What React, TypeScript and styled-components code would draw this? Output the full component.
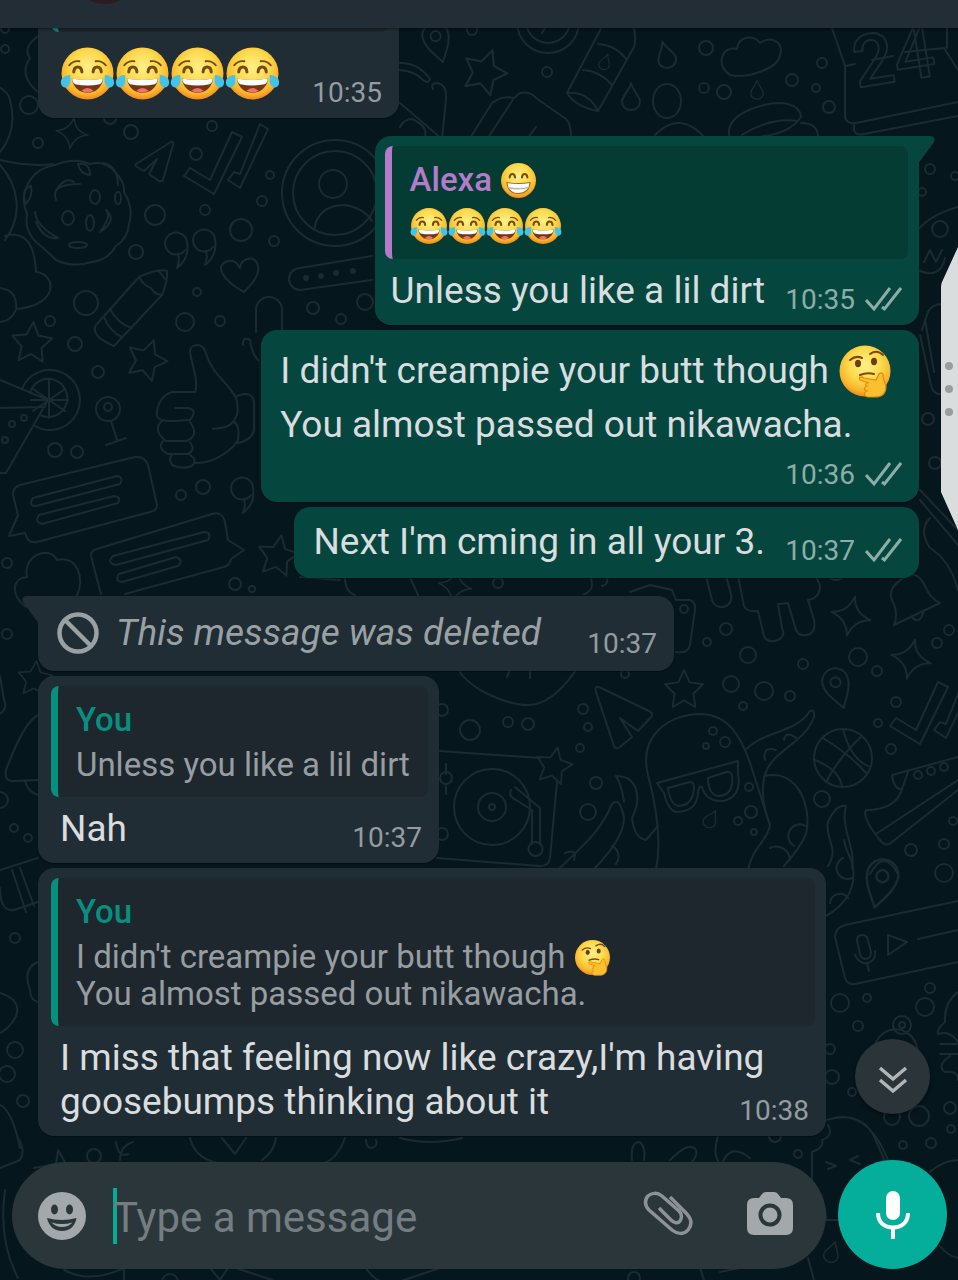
import React from "react";
import styled, { createGlobalStyle, css } from "styled-components";

const GlobalStyle = createGlobalStyle`
  *, *::before, *::after { box-sizing: border-box; }
  body {
    margin: 0;
    background: #05161d;
    font-family: Roboto, "Liberation Sans", sans-serif;
  }
`;

/* ---------- page frame ---------- */

const Screen = styled.div`
  position: relative;
  isolation: isolate;
  display: flex;
  flex-direction: column;
  height: 100vh;
  overflow: hidden;
  background: #05161d;
`;

const TopBar = styled.header`
  display: flex;
  align-items: flex-start;
  flex: none;
  height: 28px;
  padding-left: 72px;
  overflow: hidden;
  background: #222d35;
  box-shadow: 0 1px 3px rgba(0, 0, 0, 0.5);
  z-index: 1;
`;

const Avatar = styled.span`
  width: 66px;
  height: 66px;
  margin-top: -62px;
  border-radius: 50%;
  background: #2f1a20;
`;

const Thread = styled.main`
  display: flex;
  flex: 1;
  flex-direction: column;
  justify-content: flex-end;
  gap: 5px;
  min-height: 0;
  overflow: hidden;
  padding: 0 39px 24px 38px;
`;

/* ---------- messages ---------- */

const Bubble = styled.article<{ $out?: boolean; $first?: boolean }>`
  position: relative;
  flex: none;
  align-self: ${(p) => (p.$out ? "flex-end" : "flex-start")};
  max-width: calc(100% - 93px);
  margin-top: ${(p) => (p.$first ? "13px" : "0")};
  border-radius: 16px;
  background: ${(p) => (p.$out ? "#05473f" : "#212d34")};
  color: #d9dddf;
  box-shadow: 0 1px 1px rgba(0, 0, 0, 0.35);
  ${(p) =>
    p.$first &&
    (p.$out
      ? css`
          border-top-right-radius: 0;
        `
      : css`
          border-top-left-radius: 0;
        `)}
`;

const Tail = styled.svg<{ $out?: boolean }>`
  position: absolute;
  top: 0;
  width: 18px;
  height: 30px;
  ${(p) => (p.$out ? "left: 100%; margin-left: -1px;" : "right: 100%; margin-right: -1px; transform: scaleX(-1);")}
  fill: ${(p) => (p.$out ? "#05473f" : "#212d34")};
`;

const Quote = styled.blockquote<{ $out?: boolean; $color: string }>`
  margin: 0 11px 0 ${(p) => (p.$out ? "10px" : "13px")};
  padding: 12px 18px 14px 18px;
  border-left: 7px solid ${(p) => p.$color};
  border-radius: 8px;
  background: ${(p) => (p.$out ? "#043c34" : "#1e272d")};
  color: #979da1;
  font-size: 33px;
  line-height: 36px;
`;

const QuoteTop = styled.div`
  padding-top: 10px;
`;

const QuoteName = styled.cite<{ $color: string }>`
  display: flex;
  align-items: center;
  gap: 8px;
  margin-bottom: 5px;
  color: ${(p) => p.$color};
  font-style: normal;
  font-weight: 500;
  line-height: 44px;
`;

const Body = styled.div<{ $out?: boolean; $reply?: boolean; $stacked?: boolean }>`
  display: grid;
  padding: 13px 17px 14px 19px;
  ${(p) =>
    p.$reply &&
    css`
      padding-top: 10px;
      padding-bottom: 12px;
      padding-left: ${p.$out ? "16px" : "22px"};
    `}
  ${(p) => !p.$stacked && "& > * { grid-area: 1 / 1; }"}
`;

const Text = styled.p<{ $muted?: boolean }>`
  margin: 0;
  font-size: 37px;
  line-height: 44px;
  ${(p) => p.$muted && "color: #9aa1a5; font-style: italic;"}
`;

const Reserve = styled.span<{ $out?: boolean }>`
  display: inline-block;
  width: ${(p) => (p.$out ? "137px" : "90px")};
`;

const Meta = styled.footer<{ $out?: boolean }>`
  display: flex;
  align-items: center;
  gap: 10px;
  align-self: end;
  justify-self: end;
  color: ${(p) => (p.$out ? "#8dada7" : "#949ca1")};
  font-size: 28px;
  line-height: 26px;
`;

const DeletedRow = styled.div`
  display: flex;
  align-items: center;
  gap: 17px;
  padding: 2px 26px 2px 0;
`;

const EmojiSvg = styled.svg<{ $size: number; $raise?: number }>`
  display: inline-block;
  width: ${(p) => p.$size}px;
  height: ${(p) => p.$size}px;
  vertical-align: ${(p) => -(p.$raise ?? 0)}px;
`;

const EmojiRow = styled.span`
  display: flex;
`;

/* ---------- composer ---------- */

const Composer = styled.form`
  display: flex;
  align-items: flex-end;
  flex: none;
  gap: 12px;
  padding: 0 11px 11px 12px;
`;

const Field = styled.div`
  display: flex;
  align-items: center;
  flex: 1;
  min-width: 0;
  height: 107px;
  padding: 0 33px 0 26px;
  border-radius: 54px;
  background: #2b363b;
`;

const IconButton = styled.button`
  display: grid;
  place-items: center;
  flex: none;
  padding: 0;
  border: 0;
  background: none;
  color: #a3a8ab;
`;

const Caret = styled.span`
  flex: none;
  width: 4px;
  height: 56px;
  margin: 0 -4px 0 27px;
  background: #08ab95;
`;

const Input = styled.input`
  flex: 1;
  min-width: 0;
  height: 60px;
  padding: 3px 0 0;
  border: 0;
  outline: 0;
  background: none;
  color: #d9dddf;
  font: 400 42px Roboto, "Liberation Sans", sans-serif;
  &::placeholder {
    color: #747d81;
    opacity: 1;
  }
`;

const Actions = styled.div`
  display: flex;
  align-items: center;
  gap: 54px;
  padding-bottom: 4px;
`;

const MicButton = styled.button`
  display: grid;
  place-items: center;
  flex: none;
  width: 109px;
  height: 109px;
  padding: 0;
  border: 0;
  border-radius: 50%;
  background: #04ae9b;
  color: #fff;
`;

const JumpButton = styled.button`
  position: absolute;
  right: 28px;
  bottom: 166px;
  display: grid;
  place-items: center;
  width: 75px;
  height: 75px;
  padding: 6px 0 0;
  border: 0;
  border-radius: 50%;
  background: #2a3439;
  color: #b0b5b7;
  box-shadow: 0 2px 4px rgba(0, 0, 0, 0.4);
`;

const EdgeHandle = styled.svg`
  position: absolute;
  top: 247px;
  right: 0;
  width: 17px;
  height: 283px;
`;

const Wallpaper = styled.svg`
  position: absolute;
  inset: 0;
  z-index: -1;
  width: 100%;
  height: 100%;
  fill: none;
  stroke: #1b2b31;
  stroke-width: 2;
  stroke-linecap: round;
  stroke-linejoin: round;
`;

/* ---------- emoji ---------- */

type EmojiProps = { size: number; drop?: number };

const JoyEmoji = ({ size, drop }: EmojiProps) => (
  <EmojiSvg $size={size} $raise={drop} viewBox="0 0 54 54" role="img" aria-label="😂">
    <circle cx="27" cy="27" r="25.5" fill="url(#face)" />
    <g fill="none" stroke="#7a4a0c" strokeLinecap="round">
      <path d="M9 19Q13 14 19 15M45 19Q41 14 35 15" strokeWidth="1.8" />
      <path d="M13.500 25.500C14 19 21 19 21.500 25.500M32.500 25.500C33 19 40 19 40.500 25.500" strokeWidth="3" />
    </g>
    <path d="M11.500 32Q27 35 42.500 32C41 41 35 46 27 46S13 41 11.500 32Z" fill="#75370f" />
    <path d="M12 32Q27 35 42 32Q42 36 39 37.500Q27 40 15 37.500Q12 36 12 32Z" fill="#fff" />
    <path d="M21 44Q27 38.500 33 44Q27 47.500 21 44Z" fill="#f0716f" />
    <path d="M10 28.500C3 29 0 33 1 37S6 42 8.500 39 10 33 10 28.500Z" fill="#43c4e6" />
    <path d="M44 28.500C51 29 54 33 53 37S48 42 45.500 39 44 33 44 28.500Z" fill="#43c4e6" />
  </EmojiSvg>
);

const GrinEmoji = ({ size, drop }: EmojiProps) => (
  <EmojiSvg $size={size} $raise={drop} viewBox="0 0 54 54" role="img" aria-label="😁">
    <circle cx="27" cy="27" r="25.500" fill="url(#face)" />
    <path
      d="M14 22.500C15 16 21 16 22 22.500M32 22.500C33 16 39 16 40 22.500"
      fill="none"
      stroke="#7a4a0c"
      strokeWidth="3"
      strokeLinecap="round"
    />
    <path d="M10 30Q27 33 44 30C43 41 36 46 27 46S11 41 10 30Z" fill="#fff" stroke="#a8651a" strokeWidth="1.500" />
    <path d="M11 37Q27 41 43 37" fill="none" stroke="#b9b3a4" strokeWidth="2" />
  </EmojiSvg>
);

const ThinkEmoji = ({ size, drop }: EmojiProps) => (
  <EmojiSvg $size={size} $raise={drop} viewBox="0 0 54 54" role="img" aria-label="🤔">
    <circle cx="27" cy="27" r="25.500" fill="url(#face)" />
    <g fill="none" stroke="#7a4a0c" strokeWidth="2" strokeLinecap="round">
      <path d="M12 16Q18 11 24 14M32 10Q39 5 45 11M22 31Q29 28 36 30" />
    </g>
    <ellipse cx="20" cy="19.500" rx="3" ry="3.700" fill="#6b3d0c" />
    <ellipse cx="36" cy="17.500" rx="3" ry="3.700" fill="#6b3d0c" />
    <path
      d="M22 36C20 33 23 32 26 34L38 36L41 30C43 28 46 29 45 33L48 42C48 50 44 53 37 53H30C25 52 26 48 29 47C25 46 26 43 29 42C26 41 28 38 31 39Z"
      fill="#fcc02e"
      stroke="#e08a12"
      strokeWidth="1.200"
    />
  </EmojiSvg>
);

/* ---------- icons ---------- */

const Ticks = () => (
  <svg width="37" height="26" viewBox="0 0 37 26" fill="none" stroke="#8dada7" strokeWidth="3" role="img" aria-label="Delivered">
    <path d="M1 13L9 22L25 1M17 20L19.500 22L36 1" />
  </svg>
);

const BlockedIcon = () => (
  <svg width="42" height="42" viewBox="0 0 42 42" fill="none" stroke="#9aa1a5" strokeWidth="4.500" aria-hidden="true">
    <circle cx="21" cy="21" r="18.500" />
    <path d="M8 8L34 34" />
  </svg>
);

const SmileIcon = () => (
  <svg width="48" height="48" viewBox="1 1 48 48" aria-hidden="true">
    <circle cx="25" cy="25" r="24" fill="currentColor" />
    <ellipse cx="17.500" cy="18.500" rx="3.500" ry="5" fill="#2b363b" />
    <ellipse cx="32.500" cy="18.500" rx="3.500" ry="5" fill="#2b363b" />
    <path d="M10 27Q25 31 39.500 27C38 36 32 40 25 40S12 36 10 27Z" fill="#2b363b" />
    <path d="M14.500 31.500Q25 34.500 35.500 31.500Q31 36 25 36T14.500 31.500Z" fill="currentColor" />
  </svg>
);

const ClipIcon = () => (
  <svg width="50" height="46" viewBox="0 0 50 46" fill="none" stroke="#8c9295" strokeWidth="3.500" strokeLinecap="butt" aria-hidden="true">
    <path d="M27 6L43 22C49 28 49 34 45 39S34 43 29 39L6 19C1 14 2 8 5 5S14 1 19 5L36 20C39 23 39 27 37 30S31 32 28 29L16 17" />
  </svg>
);

const CameraIcon = () => (
  <svg width="46" height="44" viewBox="0 0 46 44" aria-hidden="true">
    <path
      d="M7 6H12L15 2Q16.500 0 19 0H27Q29.500 0 31 2L34 6H39Q46 6 46 13V36Q46 43 39 43H7Q0 43 0 36V13Q0 6 7 6Z"
      fill="currentColor"
    />
    <circle cx="23" cy="23" r="9.500" fill="currentColor" stroke="#2b363b" strokeWidth="4" />
  </svg>
);

const MicIcon = () => (
  <svg width="36" height="48" viewBox="0 0 36 48" aria-hidden="true">
    <rect x="11" y="0" width="14" height="29" rx="7" fill="currentColor" />
    <path d="M3 22C3 32 10 36.500 18 36.500S33 32 33 22M18 36V48" fill="none" stroke="currentColor" strokeWidth="4" />
  </svg>
);

const DoubleDownIcon = () => (
  <svg width="30" height="28" viewBox="0 0 30 28" fill="none" stroke="currentColor" strokeWidth="3.500" aria-hidden="true">
    <path d="M2 2L15 13L28 2M2 14L15 25L28 14" />
  </svg>
);

/* ---------- wallpaper ---------- */

const dots: number[][] = [
  [5, 29, 4], [5, 49, 4], [29, 105, 9], [38, 143, 5], [131, 132, 7], [110, 118, 6], [196, 154, 6], [212, 126, 5],
  [270, 175, 4], [262, 201, 5], [155, 215, 10], [205, 210, 5], [241, 230, 11], [136, 252, 7], [274, 241, 5],
  [86, 303, 12], [197, 292, 4], [50, 321, 5], [185, 322, 9], [220, 321, 5], [313, 308, 6], [341, 319, 5],
  [365, 302, 8], [75, 344, 7], [98, 372, 6], [108, 409, 12], [108, 407, 4], [55, 450, 7], [77, 452, 6],
  [181, 495, 5], [203, 487, 7], [7, 563, 5], [235, 584, 6], [252, 589, 3], [12, 424, 3], [24, 418, 3], [5, 440, 3],
  [472, 30, 5], [547, 72, 5], [706, 48, 7], [704, 88, 5], [724, 92, 7], [792, 80, 6], [822, 63, 5], [816, 88, 4],
  [829, 107, 6], [930, 169, 5], [922, 192, 4], [955, 176, 4], [928, 419, 6], [935, 463, 6],
  [498, 583, 5], [684, 609, 4], [726, 629, 6], [707, 642, 4], [748, 655, 8], [803, 664, 5], [858, 657, 9],
  [877, 671, 5], [937, 643, 5], [949, 630, 5], [731, 684, 8], [764, 691, 9], [790, 696, 5], [743, 706, 4],
  [583, 709, 5], [588, 727, 4], [580, 748, 4], [470, 730, 10], [508, 722, 5], [528, 724, 6], [442, 710, 6],
  [625, 674, 4], [596, 783, 6], [588, 812, 8], [713, 731, 4], [725, 742, 5], [706, 746, 3], [749, 787, 4],
  [751, 812, 6], [738, 821, 4], [754, 832, 3], [896, 702, 5], [878, 723, 4], [891, 749, 5], [822, 799, 8],
  [911, 850, 6], [944, 844, 5], [953, 821, 4], [442, 834, 6], [836, 570, 10], [944, 873, 9], [840, 1003, 9],
  [867, 998, 4], [858, 1026, 5], [925, 1007, 9], [930, 988, 5], [902, 1025, 9], [902, 1025, 3], [832, 1077, 7],
  [830, 1049, 5], [852, 1092, 4], [892, 1117, 8], [919, 1116, 10], [950, 1108, 6], [951, 1129, 4], [931, 1143, 5],
  [903, 1145, 4], [798, 1154, 4], [15, 938, 5], [15, 1050, 8], [7, 1074, 8], [23, 1101, 6], [14, 828, 4],
  [28, 838, 4], [7, 634, 5], [94, 1156, 7], [0, 800, 8], [775, 1136, 6],
];

const stars: number[][] = [
  [32, 342, 20, 4], [147, 359, 20, 20], [278, 555, 20, 10], [485, 71, 22, 20], [684, 689, 19, 0], [554, 765, 18, 12],
  [35, 678, 17, 5],
];

const sparkles: number[][] = [
  [72, 133, 16, 8], [851, 616, 20, 12], [911, 659, 20, 12], [455, 586, 17, 10],
];

const Doodles = () => (
  <Wallpaper viewBox="0 0 958 1280" preserveAspectRatio="xMidYMid slice" aria-hidden="true">
    <defs>
      <radialGradient id="face" cx="50%" cy="38%" r="64%">
        <stop offset="0" stopColor="#fdf08a" />
        <stop offset="0.5" stopColor="#fdd94c" />
        <stop offset="0.8" stopColor="#fbb52c" />
        <stop offset="1" stopColor="#ee8018" />
      </radialGradient>
      <path id="star" d="M0 -20L6 -7L20 -5L10 5L12 19L0 12L-12 19L-10 5L-20 -5L-6 -7Z" />
      <path id="sparkle" d="M0 -20Q2 -4 20 0Q4 3 0 20Q-3 4 -20 0Q-4 -3 0 -20Z" />
      <path id="pin" d="M0 22C-6 12 -13 4 -13 -6A13 13 0 0 1 13 -6C13 4 6 12 0 22ZM5 -5A5 5 0 1 1 -5 -5A5 5 0 1 1 5 -5" />
      <path id="drop" d="M0 -14C2 -6 9 -1 9 5A9 8 0 0 1 -9 5C-9 -1 -2 -6 0 -14Z" />
      <path id="comma" d="M8 2A11 11 0 1 1 10 -6C12 6 8 14 0 20Q3 12 1 6" />
      <path id="ticks" d="M-42 24L-36 16L-16 28L6 -20L16 -15L-12 42ZM2 28L8 20L14 22L34 -28L42 -23L14 36Z" />
    </defs>
    {dots.map(([x, y, r], i) => (
      <circle key={i} cx={x} cy={y} r={r} />
    ))}
    {stars.map(([x, y, r, a], i) => (
      <use key={i} href="#star" transform={`translate(${x} ${y}) rotate(${a}) scale(${r / 20})`} />
    ))}
    {sparkles.map(([x, y, r, a], i) => (
      <use key={i} href="#sparkle" transform={`translate(${x} ${y}) rotate(${a}) scale(${r / 20})`} />
    ))}
    <use href="#pin" transform="translate(437 41) rotate(-16)" />
    <use href="#pin" transform="translate(837 687) rotate(-18)" />
    <use href="#pin" transform="translate(881 882) rotate(14) scale(1.2)" />
    <use href="#drop" transform="translate(666 55) rotate(-15)" />
    <use href="#drop" transform="translate(631 97)" />
    <use href="#drop" transform="translate(757 90) scale(.7)" />
    <use href="#drop" transform="translate(711 819) rotate(30) scale(.7)" />
    <use href="#drop" transform="translate(832 1252) rotate(18) scale(.8)" />
    <use href="#comma" transform="translate(177 248)" />
    <use href="#comma" transform="translate(205 245)" />
    <use href="#comma" transform="translate(243 493)" />
    <use href="#ticks" transform="translate(226 152)" />
    <use href="#ticks" transform="translate(932 702)" />

    {/* cookie */}
    <path d="M55 165Q75 157 90 164Q105 160 115 172Q125 182 124 192Q134 208 129 224Q128 238 116 246Q108 260 92 262Q72 268 56 260Q46 250 36 242Q24 230 27 214Q20 198 28 184Q36 168 55 165Z" />
    <path d="M56 200Q50 184 80 184M56 190Q66 176 74 182M78 164Q90 162 90 175Q80 174 78 164M103 163Q118 166 118 185M35 212Q36 226 58 238Q44 240 36 222M106 210Q118 220 100 232Q112 216 106 210M26 204Q20 190 31 186Q33 196 26 204" />
    <ellipse cx="95" cy="197" rx="5" ry="7" />
    <ellipse cx="118" cy="198" rx="3" ry="6" />
    <ellipse cx="68" cy="218" rx="6" ry="7" />
    <ellipse cx="90" cy="223" rx="4" ry="8" />
    <ellipse cx="78" cy="245" rx="9" ry="3" />
    <path d="M0 160Q30 167 53 164M0 152Q18 130 10 100Q8 92 0 88M0 165C18 185 24 215 5 240M5 236Q34 228 36 272C56 274 60 304 18 309M0 288Q18 290 16 310Q10 322 0 322M38 36Q22 48 30 58Q18 76 38 92" />

    {/* contact */}
    <circle cx="335" cy="193" r="53" />
    <circle cx="335" cy="193" r="42" />
    <circle cx="333" cy="184" r="14" />
    <path d="M314 230Q318 205 345 205Q364 208 372 221" />
    <path d="M244 292C222 280 214 265 228 261C236 259 238 266 240 268C240 258 256 254 258 266C260 276 250 286 244 292Z" />
    <path d="M372 256L300 268A11 11 0 0 0 300 290L372 280M256 332V310A13 13 0 0 1 282 310V332" />
    <g fill="#1b2b31">
      <circle cx="306" cy="278" r="2" />
      <circle cx="321" cy="276" r="2" />
      <circle cx="336" cy="273" r="2" />
      <circle cx="353" cy="271" r="2" />
    </g>
    <path d="M136 164L171 142Q174 141 173 145L163 180Q162 182 159 181L149 174L157 159L144 171L137 167Q134 165 136 164Z" />

    {/* crayon */}
    <path d="M139 277L96 325Q90 336 114 346L162 295Q168 280 167 271Q158 268 139 277ZM139 277Q144 286 151 288Q154 294 162 295M158 270L165 279M110 309Q118 324 132 328M104 317Q110 332 122 337" />

    {/* citrus and glass */}
    <path d="M22 389A30 30 0 1 1 35 426M30 393A19 19 0 1 1 40 415M49 380V418M33 389L65 411M33 411L65 389M31 400H68M0 380L48 400L6 473H0M0 408L45 407" />
    <path d="M111 421L117 440M106 445L126 438" />

    {/* thumbs up */}
    <path d="M195 392C199 382 192 366 190 352C190 343 202 343 205 351C212 375 228 382 236 398C240 412 236 418 233 422C228 428 220 428 213 429M195 392H172C160 396 156 408 157 416C160 424 180 420 190 420Q198 410 188 408H175M190 422Q200 436 186 441H166Q152 430 162 421M190 442Q196 450 188 454H168Q156 448 164 440M190 455Q198 460 192 466Q182 470 172 465Q168 458 172 455M195 463C215 464 234 448 238 440Q240 425 234 422M237 396Q252 390 254 402V430Q252 440 238 443M243 345Q242 336 250 340Q252 354 258 360" />

    {/* chat bubbles */}
    <path d="M20 485L135 457Q145 456 148 465L157 505Q157 511 150 512L37 542Q28 544 25 533L9 536L18 515L13 495Q13 487 20 485Z" />
    <path d="M33 498L117 476Q124 477 120 484L36 506Q28 506 33 498ZM39 515L114 496Q122 497 118 503L42 524Q34 522 39 515Z" />
    <path d="M125 594L224 567Q230 565 231 559L244 550L228 540L225 522Q222 511 212 514L100 548Q90 550 91 556L101 594" />
    <path d="M113 556L204 532Q212 532 208 540L116 565Q106 563 113 556ZM119 574L176 557Q184 560 178 566L122 582Q114 581 119 574Z" />
    <path d="M26 607C10 595 12 578 27 577C22 555 50 545 57 560C78 555 85 580 77 595" />

    {/* clock, glue, cloud, cup, note */}
    <g transform="translate(0 -5)">
      <circle cx="548" cy="27" r="31" />
      <circle cx="548" cy="26" r="22" />
      <path d="M542 38L548 28M606 24L567 98Q576 112 598 116L634 52Q638 34 628 24M598 49Q616 50 627 65M583 75Q600 76 612 90M567 98Q588 96 598 116" />
      <use href="#drop" transform="translate(605 67) rotate(20) scale(.6)" />
      <ellipse cx="667" cy="106" rx="14" ry="17" />
      <path d="M730 80C715 70 722 50 737 54C738 41 754 39 760 48C772 40 784 48 780 60C778 74 746 84 730 80Z" />
      <path d="M730 144C722 120 760 108 782 108Q800 110 801 122Q790 138 764 141Q738 146 730 158M742 140Q770 122 798 126M801 128Q820 128 818 146M655 140Q680 114 706 144" />
      <path d="M467 148L492 108Q502 100 514 103L520 98Q530 96 536 103L566 124Q572 130 571 148M514 103L486 146M524 148L536 132M400 68C416 68 424 76 430 84Q428 90 422 84Q414 76 400 75M433 94Q430 88 438 88Q447 90 446 104L442 144M400 108L442 144M400 132Q404 124 412 124Q430 132 424 144" />
    </g>

    {/* calendar */}
    <path d="M832 28L845 66V117Q846 124 856 123L958 102M845 66L855 64M872 60L893 56M905 52L944 48L958 70M947 28V48M854 125V130Q856 136 864 134L958 116" />
    <text x="857" y="88" transform="rotate(-9 856 88)" fontFamily="Roboto, sans-serif" fontSize="72" fontWeight="500">24</text>

    {/* right edge */}
    <path d="M918 230Q930 215 958 207M918 270Q940 280 945 258M924 262L930 250L936 262L942 250M922 330L928 312Q932 304 942 304M920 335L930 380Q932 396 942 394M925 320L934 372M920 490L958 530M920 500L958 545M930 518Q918 530 930 548Q950 560 958 590" />
    <circle cx="940" cy="229" r="8" />

    {/* row above the deleted message */}
    <path d="M300 577L340 580M345 577Q345 592 355 595M410 577L418 595M590 576Q596 590 584 594M606 576Q610 584 602 586M630 592L650 585L672 590L676 600L690 600Q696 602 695 610L690 645Q688 654 676 652M706 576L712 600Q716 610 726 606Q734 602 730 590L726 576M738 576L744 606Q746 612 758 611L764 636Q768 644 778 640Q786 636 782 628L778 604L788 603L796 630Q800 638 810 634Q816 630 814 620L808 600Q820 598 820 586L816 576" />
    <path d="M898 582Q886 592 894 604Q898 616 894 625L940 603Q930 598 926 588Q918 570 906 576ZM912 617Q920 626 924 610" />
    <path d="M459 670Q462 678 480 690Q508 705 528 705Q552 705 576 670M507 677L510 670M530 670V678" />
    <path d="M599 687Q594 686 596 692L614 746Q616 750 620 747L632 737L620 718L638 731L652 716Q653 713 649 711Z" />

    {/* turntable */}
    <path d="M440 751L540 758M557 782L550 858Q549 866 540 866L437 858M446 764V774M446 786V794M511 790Q508 796 516 800L532 810V844M515 787L540 808V844M536 842A7 7 0 1 1 535 842" />
    <circle cx="446" cy="778" r="6" />
    <circle cx="492" cy="807" r="38" />
    <circle cx="492" cy="807" r="14" />
    <circle cx="492" cy="807" r="3" />

    {/* octopus with sunglasses */}
    <path d="M656 870C662 840 656 805 648 775C638 735 670 714 700 714C730 714 742 740 750 763L770 825C768 840 752 848 748 870" />
    <path d="M657 783L738 761V774Q742 796 724 801Q706 802 702 787Q698 785 698 794Q696 812 676 812Q668 810 664 793ZM668 788L690 782Q696 782 693 794Q690 806 678 806Q670 804 668 788ZM708 778L726 772Q734 770 732 784Q730 796 718 796Q708 794 708 778Z" />
    <path d="M745 750C765 730 795 734 810 711Q815 709 814 717C804 745 770 750 764 778Q760 800 770 825M764 776C800 768 812 810 806 834Q800 848 784 866M560 868C580 848 600 833 612 804Q620 796 624 818Q624 838 595 868M616 776C638 776 642 798 632 818Q634 838 646 840L658 826M616 776Q622 786 624 802M770 848A14 14 0 0 1 790 860M806 826A10 10 0 0 0 794 846M765 760Q762 746 776 750M784 740Q786 730 796 738M612 846A12 12 0 0 1 616 864M565 853Q578 848 574 860" />

    {/* basketball, shoe */}
    <circle cx="843" cy="758" r="29" />
    <path d="M823 738Q852 756 867 774M843 729Q850 758 868 766M815 760Q840 770 842 787M826 782Q840 756 862 736" />
    <path d="M958 757L892 775Q894 790 902 789L908 772M902 789Q896 810 866 810Q862 818 880 840Q886 848 892 842L958 790M876 834L958 780M828 866C840 848 824 838 828 822Q836 804 846 806C840 828 856 848 852 868M870 874Q884 848 898 874" />
    <circle cx="918" cy="775" r="4" />
    <circle cx="931" cy="771" r="4" />
    <circle cx="944" cy="767" r="4" />

    {/* voice note */}
    <path d="M958 901L845 925Q835 928 835 937L845 978Q847 985 855 984L958 962M888 935V955L907 942ZM918 939L958 930M857 940Q857 935 862 935Q867 935 868 940L871 952Q871 958 866 959Q861 959 860 954ZM855 955Q860 965 868 963Q876 960 875 951M867 963L869 971M826 916Q860 896 852 862Q846 850 844 840M843 858A9 9 0 0 0 852 878M830 903A10 10 0 0 1 848 898" />
    <path d="M958 992Q944 1002 945 1022Q936 1030 938 1034Q950 1030 958 1042M940 1044H958M940 1054L958 1054M950 1056Q936 1066 945 1072Q958 1070 958 1080M875 1044Q884 1026 902 1030Q916 1036 918 1052" />

    {/* left edge */}
    <path d="M38 715Q24 722 6 770Q4 782 14 781L38 780M25 781Q28 792 38 795M0 676L4 700Q8 708 0 714M0 870L38 858M12 870L26 912M20 868L34 906M0 888Q0 912 14 910L38 902M38 962Q22 968 30 990Q30 1000 38 1002M0 993Q22 1000 16 1016Q10 1028 0 1033M0 1105Q12 1110 20 1148" />

    {/* bottom */}
    <path d="M0 1168L20 1160Q26 1150 18 1138M34 1168L56 1164L58 1150L66 1164M116 1142Q118 1158 128 1154M133 1142Q120 1146 120 1160M190 1138Q196 1162 226 1164M222 1138L235 1154L246 1138M345 1138Q336 1162 320 1164M276 1138Q274 1152 262 1160M366 1140Q366 1148 372 1148Q378 1146 376 1140M400 1138Q430 1146 462 1138M632 1160Q630 1142 640 1142Q646 1148 644 1160M670 1160Q690 1140 696 1150Q698 1156 690 1164M718 1136Q712 1154 720 1164M722 1164Q730 1142 750 1158M826 1120Q860 1110 874 1136L886 1164M834 1118Q868 1110 888 1160M828 1125Q834 1136 822 1140Q824 1148 812 1152V1186Q826 1200 826 1220M826 1162L836 1166L828 1169M858 1156L850 1160L860 1164M930 1172Q944 1160 958 1160M940 1246Q948 1256 958 1258M826 1220H840M5 1190Q-2 1240 18 1278M64 1270Q90 1284 124 1268M124 1268V1280M210 1268L220 1280L228 1268M236 1268L272 1280M366 1268Q380 1290 404 1280L440 1268M700 1268L704 1280M720 1272L740 1268M808 1258L814 1280" />
    <circle cx="634" cy="1278" r="6" />
    <circle cx="170" cy="1282" r="8" />
  </Wallpaper>
);

/* ---------- screen ---------- */

const TailShape = ({ out }: { out?: boolean }) => (
  <Tail $out={out} viewBox="0 0 18 30" aria-hidden="true">
    <path d="M0 0H13Q18 1 16 6L0 28Z" />
  </Tail>
);

const Joys = ({ size }: { size: number }) => (
  <EmojiRow>
    {[0, 1, 2, 3].map((i) => (
      <JoyEmoji key={i} size={size} />
    ))}
  </EmojiRow>
);

const CutQuote = styled(Quote)`
  width: 337px;
  height: 111px;
`;

const BigEmoji = styled.div`
  padding: 4px 0 5px;
`;

const ThoughtLine = styled.span`
  display: flex;
  align-items: center;
  gap: 9px;
  height: 54px;
  margin-bottom: 5px;
`;

const StackedText = styled(Text)`
  padding: 1px 10px 15px 0;
`;

export default function App() {
  return (
    <Screen>
      <GlobalStyle />
      <Doodles />
      <TopBar>
        <Avatar />
      </TopBar>

      <Thread>
        <Bubble>
          <QuoteTop>
            <CutQuote $color="#07907f" />
          </QuoteTop>
          <Body $reply>
            <BigEmoji>
              <Joys size={55} />
            </BigEmoji>
            <Meta>10:35</Meta>
          </Body>
        </Bubble>

        <Bubble $out $first>
          <TailShape out />
          <QuoteTop>
            <Quote $out $color="#b57bcb">
              <QuoteName $color="#b57bcb">
                Alexa <GrinEmoji size={37} />
              </QuoteName>
              <Joys size={38} />
            </Quote>
          </QuoteTop>
          <Body $out $reply>
            <Text>
              Unless you like a lil dirt
              <Reserve $out />
            </Text>
            <Meta $out>
              10:35 <Ticks />
            </Meta>
          </Body>
        </Bubble>

        <Bubble $out>
          <Body $out $stacked>
            <StackedText>
              <ThoughtLine>
                I didn't creampie your butt though <ThinkEmoji size={54} />
              </ThoughtLine>
              You almost passed out nikawacha.
            </StackedText>
            <Meta $out>
              10:36 <Ticks />
            </Meta>
          </Body>
        </Bubble>

        <Bubble $out>
          <Body $out>
            <Text>
              Next I'm cming in all your 3.
              <Reserve $out />
            </Text>
            <Meta $out>
              10:37 <Ticks />
            </Meta>
          </Body>
        </Bubble>

        <Bubble $first>
          <TailShape />
          <Body>
            <DeletedRow>
              <BlockedIcon />
              <Text $muted>
                This message was deleted
                <Reserve />
              </Text>
            </DeletedRow>
            <Meta>10:37</Meta>
          </Body>
        </Bubble>

        <Bubble>
          <QuoteTop>
            <Quote $color="#07907f">
              <QuoteName $color="#07907f">You</QuoteName>
              Unless you like a lil dirt
            </Quote>
          </QuoteTop>
          <Body $reply>
            <Text>
              Nah
              <Reserve />
            </Text>
            <Meta>10:37</Meta>
          </Body>
        </Bubble>

        <Bubble>
          <QuoteTop>
            <Quote $color="#07907f">
              <QuoteName $color="#07907f">You</QuoteName>
              I didn't creampie your butt though <ThinkEmoji size={37} drop={8} />
              <br />
              You almost passed out nikawacha.
            </Quote>
          </QuoteTop>
          <Body $reply>
            <Text>
              I miss that feeling now like crazy,I'm having goosebumps thinking about it
              <Reserve />
            </Text>
            <Meta>10:38</Meta>
          </Body>
        </Bubble>
      </Thread>

      <Composer onSubmit={(e) => e.preventDefault()}>
        <Field>
          <IconButton type="button" aria-label="Emoji">
            <SmileIcon />
          </IconButton>
          <Caret />
          <Input aria-label="Message" placeholder="Type a message" />
          <Actions>
            <IconButton type="button" aria-label="Attach">
              <ClipIcon />
            </IconButton>
            <IconButton type="button" aria-label="Camera">
              <CameraIcon />
            </IconButton>
          </Actions>
        </Field>
        <MicButton type="button" aria-label="Record voice message">
          <MicIcon />
        </MicButton>
      </Composer>

      <JumpButton type="button" aria-label="Scroll to latest">
        <DoubleDownIcon />
      </JumpButton>

      <EdgeHandle viewBox="0 0 17 283" aria-hidden="true">
        <path d="M17 0L1 35Q0 37 0 40V245L17 283Z" fill="#d9dddd" />
        <circle cx="8" cy="119" r="4" fill="#999d9d" />
        <circle cx="8" cy="142" r="4" fill="#999d9d" />
        <circle cx="8" cy="165" r="4" fill="#999d9d" />
      </EdgeHandle>
    </Screen>
  );
}
